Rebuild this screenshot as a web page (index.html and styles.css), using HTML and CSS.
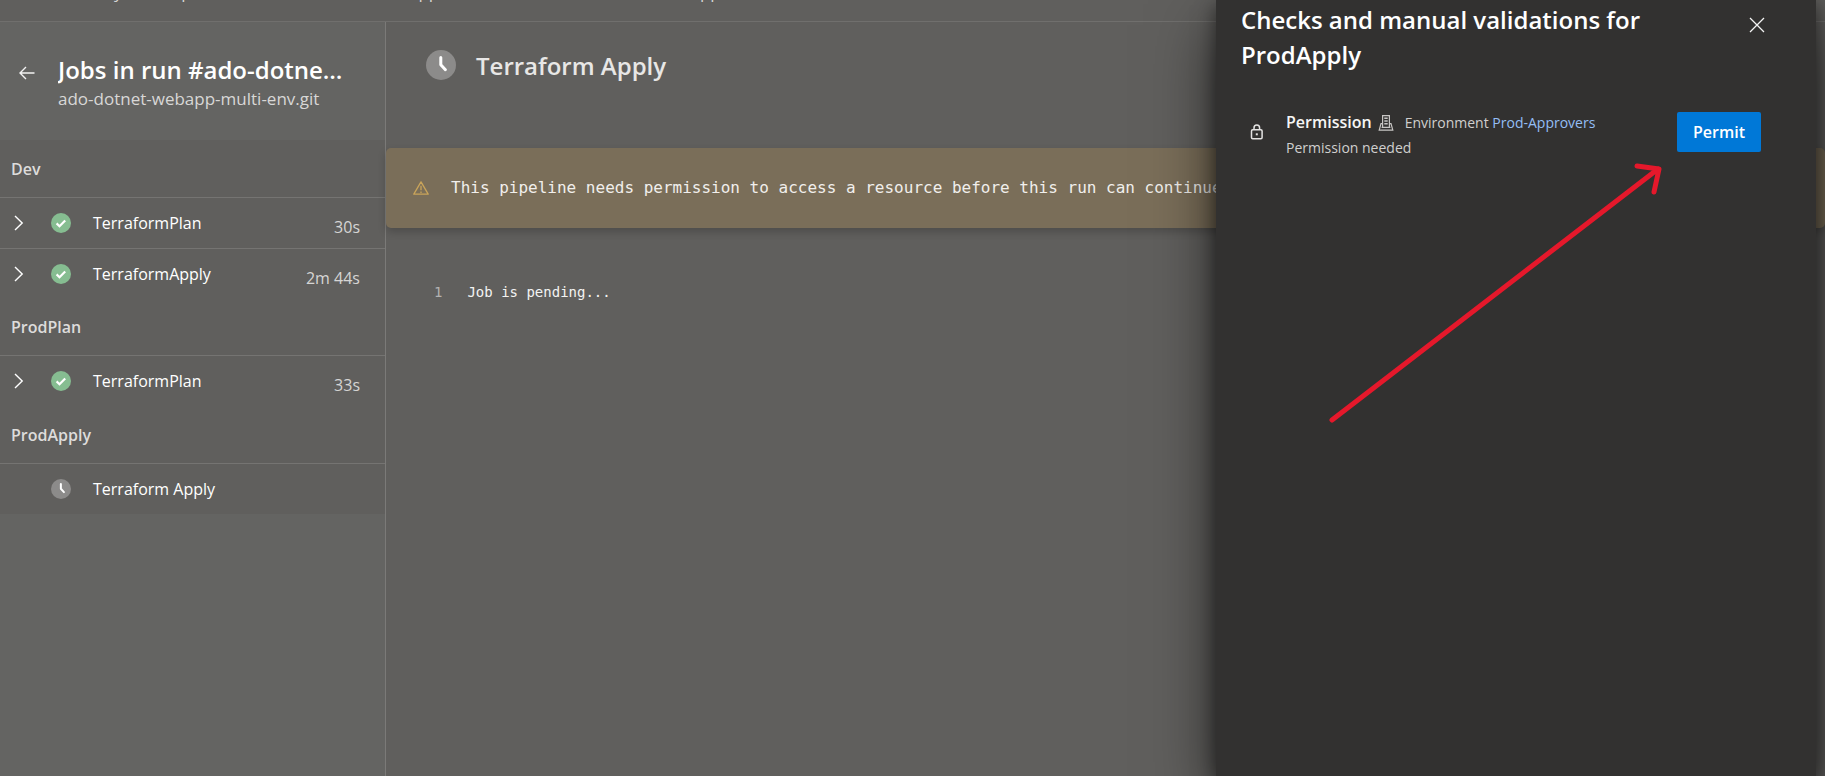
FILE: index.html
```html
<!DOCTYPE html>
<html lang="en">
<head>
<meta charset="utf-8">
<title>Jobs in run - Checks and manual validations</title>
<link rel="stylesheet" href="styles.css">
</head>
<body>
<svg class="defs" aria-hidden="true">
  <symbol id="ok" viewBox="0 0 20 20"><circle cx="10" cy="10" r="10" fill="#86bd91"/><path d="M5.6 10.4l2.9 2.8 5.7-5.8" fill="none" stroke="#fff" stroke-width="2.2"/></symbol>
  <symbol id="clock" viewBox="0 0 30 30"><circle cx="15" cy="15" r="15" fill="#8c8b8a"/><path d="M14.8 7.5v7.2l4.6 5" fill="none" stroke="#fff" stroke-width="3" stroke-linecap="round" stroke-linejoin="round"/></symbol>
  <symbol id="chev" viewBox="0 0 10 16"><path d="M1 1l7.2 7L1 15" fill="none" stroke="#fff" stroke-width="1.4"/></symbol>
</svg>
<div class="page">
  <nav class="crumbs" aria-label="Breadcrumb">
    <span>/</span><a href="#">Ay</a><span>/</span><a href="#">Pipelines</a><span>/</span><a href="#">ado-dotnet-webapp-multi-env</a><span>/</span><a href="#">ado-dotnet-webapp-multi-env</a>
  </nav>
  <div class="body">
    <aside class="sidebar">
      <header class="run">
        <button class="icon-button back" aria-label="Back"><svg width="16" height="14" viewBox="0 0 16 14"><path d="M15.5 7H1M7 1L1 7l6 6" fill="none" stroke="#f2f2f2" stroke-width="1.4"/></svg></button>
        <div class="run-text">
          <h1 class="heading">Jobs in run #ado-dotnet-webapp-multi-env</h1>
          <p class="repo">ado-dotnet-webapp-multi-env.git</p>
        </div>
      </header>
      <section class="stage">
        <h2 class="stage-name">Dev</h2>
        <ul class="jobs">
          <li class="job"><button class="icon-button expand" aria-label="Expand"><svg width="10" height="16"><use href="#chev"/></svg></button><svg width="20" height="20"><use href="#ok"/></svg><span class="job-name">TerraformPlan</span><span class="time">30s</span></li>
          <li class="job"><button class="icon-button expand" aria-label="Expand"><svg width="10" height="16"><use href="#chev"/></svg></button><svg width="20" height="20"><use href="#ok"/></svg><span class="job-name">TerraformApply</span><span class="time">2m 44s</span></li>
        </ul>
      </section>
      <section class="stage">
        <h2 class="stage-name">ProdPlan</h2>
        <ul class="jobs">
          <li class="job"><button class="icon-button expand" aria-label="Expand"><svg width="10" height="16"><use href="#chev"/></svg></button><svg width="20" height="20"><use href="#ok"/></svg><span class="job-name">TerraformPlan</span><span class="time">33s</span></li>
        </ul>
      </section>
      <section class="stage">
        <h2 class="stage-name">ProdApply</h2>
        <ul class="jobs">
          <li class="job"><span class="expand"></span><svg width="20" height="20"><use href="#clock"/></svg><span class="job-name">Terraform Apply</span></li>
        </ul>
      </section>
    </aside>
    <main class="main">
      <header class="job-head">
        <svg width="30" height="30"><use href="#clock"/></svg>
        <h2 class="heading">Terraform Apply</h2>
      </header>
      <div class="banner" role="alert">
        <svg width="16" height="14" viewBox="0 0 16 14"><path d="M8 .9L15.2 13.2H.8zM8 4.8v4.4M8 10.4v1.5" fill="none" stroke="#c9a45a" stroke-width="1.3" stroke-linejoin="round"/></svg>
        <span>This pipeline needs permission to access a resource before this run can continue</span>
      </div>
      <div class="log"><span class="line-no">1</span><span>Job is pending...</span></div>
    </main>
  </div>
</div>
<div class="panel" role="dialog" aria-labelledby="panel-title">
  <header class="panel-head">
    <h2 class="heading panel-title" id="panel-title">Checks and manual validations for ProdApply</h2>
    <button class="icon-button close" aria-label="Close"><svg width="16" height="16" viewBox="0 0 16 16"><path d="M1 1l14 14M15 1L1 15" stroke="#f4f4f4" stroke-width="1.3"/></svg></button>
  </header>
  <div class="check">
    <svg class="lock" width="14" height="16" viewBox="0 0 14 16"><rect x="1.5" y="5.8" width="10.6" height="9" rx="1.2" fill="none" stroke="#e4e3e2" stroke-width="1.5"/><path d="M4 5.8V3.9a2.8 2.8 0 0 1 5.6 0v1.9" fill="none" stroke="#e4e3e2" stroke-width="1.5"/><rect x="5.8" y="9.3" width="2" height="2" fill="#e4e3e2"/></svg>
    <div class="check-text">
      <div class="check-line">
        <strong class="check-name">Permission</strong>
        <svg class="env" width="16" height="18" viewBox="0 0 16 18"><path d="M4.6 13V1.6h6.8V13M4.6 9.6H3L1.2 16.2h13.6L13 9.6h-1.6M3.6 13.4h8.8" fill="none" stroke="#c8c6c4" stroke-width="1.2"/><path d="M6.3 4.3h3.4M6.3 7h3.4M6.3 9.7h3.4" stroke="#c8c6c4" stroke-width="1.4"/></svg>
        <span>Environment <a class="link" href="#">Prod-Approvers</a></span>
      </div>
      <div>Permission needed</div>
    </div>
    <button class="permit">Permit</button>
  </div>
  <svg class="pointer" width="336" height="264" viewBox="0 0 336 264" aria-hidden="true"><path d="M6 258L332 7M311 4l22 3-5 23" fill="none" stroke="#e5182b" stroke-width="5" stroke-linecap="round" stroke-linejoin="round"/></svg>
</div>
</body>
</html>
```
FILE: styles.css
```css
* { box-sizing: border-box; }
body {
  margin: 0;
  height: 100vh;
  position: relative;
  overflow: hidden;
  background: #605f5d;
  color: #fff;
  font: 16px/24px "Open Sans", "Noto Sans", sans-serif;
}
h1, h2, p, ul { margin: 0; padding: 0; font-weight: 400; }
ul { list-style: none; }
svg { flex: none; display: block; }
.defs { position: absolute; width: 0; height: 0; }
.page { height: 100%; display: flex; flex-direction: column; }
.crumbs {
  flex: none;
  height: 22px;
  display: flex;
  align-items: flex-end;
  gap: 19px;
  padding: 0 78px 17px;
  border-bottom: 1px solid #706f6d;
  color: #d6d5d4;
  font-size: 17px;
  white-space: nowrap;
}
.crumbs a { color: inherit; text-decoration: none; }
.body { flex: 1; min-height: 0; display: flex; }
.heading {
  font-size: 24px;
  font-weight: 600;
  line-height: 35px;
}
.icon-button {
  display: flex;
  align-items: center;
  justify-content: flex-start;
  padding: 0;
  border: 0;
  background: none;
}
.sidebar {
  flex: none;
  width: 386px;
  border-right: 1px solid #7b7a78;
  background: #646462;
}
.run {
  height: 118px;
  display: flex;
  align-items: center;
  gap: 23px;
  padding: 0 38px 0 19px;
}
.back { padding-bottom: 16px; }
.run-text { min-width: 0; }
.run-text .heading { overflow: hidden; text-overflow: ellipsis; white-space: nowrap; }
.repo { color: #d8d7d6; font-size: 17px; }
.stage { background: #605f5d; }
.stage-name {
  padding: 17px 11px 16px;
  border-bottom: 1px solid #757472;
  color: #dddcdb;
  font-size: 16px;
  font-weight: 600;
}
.job {
  min-height: 50px;
  display: flex;
  align-items: center;
  padding: 0 25px 0 14px;
}
.job + .job { border-top: 1px solid #757472; }
.expand { width: 37px; flex: none; }
.job-name { flex: 1; margin-left: 22px; }
.time { padding-top: 8px; color: #d6d5d4; }
.main { flex: 1; min-width: 0; }
.job-head {
  height: 126px;
  display: flex;
  align-items: center;
  gap: 20px;
  padding: 0 40px 40px;
  color: #e8e7e6;
}
.banner {
  height: 80px;
  display: flex;
  align-items: center;
  gap: 22px;
  padding-left: 27px;
  border-radius: 5px;
  background: #7a6e59;
  box-shadow: 0 4px 9px rgba(0, 0, 0, .2);
  color: #f1efec;
  font: 16px/24px "DejaVu Sans Mono", monospace;
  white-space: nowrap;
}
.log {
  display: flex;
  gap: 25px;
  padding: 52px 48px;
  color: #f3f3f2;
  font: 14px/24px "DejaVu Sans Mono", monospace;
}
.line-no { color: #b3b2b1; }
.panel {
  position: absolute;
  top: 0;
  right: 9px;
  bottom: 0;
  width: 600px;
  padding: 2px 55px 0 25px;
  background: #323130;
  box-shadow: 0 25px 60px rgba(0, 0, 0, .6), 0 5px 18px rgba(0, 0, 0, .5);
}
.panel-head { display: flex; justify-content: space-between; }
.panel-title { width: 440px; }
.close { height: 46px; width: 12px; }
.check {
  display: flex;
  align-items: center;
  margin-top: 32px;
  color: #d0cfce;
  font-size: 14px;
  line-height: 25px;
}
.lock { margin-left: 9px; }
.check-text { flex: 1; margin-left: 22px; padding-top: 6px; }
.check-line { display: flex; align-items: center; gap: 6px; }
.check-line span { margin-left: 5px; }
.check-name { color: #f6f6f5; font-size: 16px; font-weight: 600; }
.link { color: #94bef5; text-decoration: none; }
.permit {
  height: 40px;
  padding: 0 16px;
  border: 0;
  border-radius: 2px;
  background: #0078d7;
  color: #fff;
  font: 600 16px/24px "Open Sans", "Noto Sans", sans-serif;
}
.pointer { position: absolute; left: 110px; top: 162px; }
```
